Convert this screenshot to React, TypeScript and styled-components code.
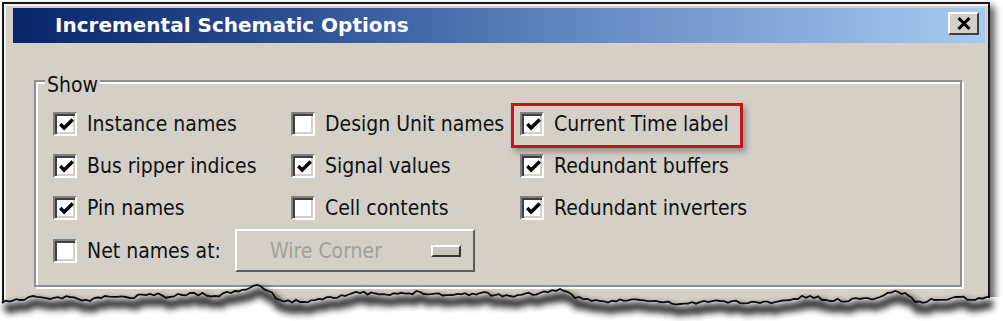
import React from 'react';
import styled, { createGlobalStyle, css } from 'styled-components';

const GlobalStyle = createGlobalStyle`
    html, body {
        margin: 0;
        padding: 0;
        background: #fff;
    }
    body {
        font-family: "DejaVu Sans Condensed", "DejaVu Sans", Tahoma, sans-serif;
    }
`;

// rough outline of the torn paper edge, in page coordinates
const anchors: [number, number][] = [
    [2, 303], [20, 300], [33, 296], [50, 299], [70, 297], [90, 301], [105, 296],
    [130, 298], [150, 294], [170, 297], [190, 293], [215, 296], [235, 291],
    [257, 285], [268, 291], [280, 300], [300, 302], [330, 297], [360, 293],
    [390, 295], [420, 292], [450, 295], [480, 293], [510, 296], [540, 293],
    [560, 289], [575, 298], [600, 301], [640, 300], [680, 304], [720, 301],
    [760, 303], [790, 300], [810, 296], [830, 301], [860, 299], [880, 297],
    [895, 291], [905, 293], [915, 302], [935, 300], [960, 297], [975, 300],
    [990, 297],
];

function tornPoints(): [number, number][] {
    let seed = 11;
    const rnd = () => {
        seed = (seed * 16807) % 2147483647;
        return seed / 2147483647;
    };
    const pts: [number, number][] = [];
    for (let i = 0; i < anchors.length - 1; i++) {
        const [x0, y0] = anchors[i];
        const [x1, y1] = anchors[i + 1];
        const steps = Math.max(1, Math.round((x1 - x0) / 4));
        for (let s = 0; s < steps; s++) {
            const t = s / steps;
            const jitter = s === 0 ? 0 : (rnd() - 0.5) * 3.4;
            pts.push([x0 + (x1 - x0) * t, y0 + (y1 - y0) * t + jitter]);
        }
    }
    pts.push(anchors[anchors.length - 1]);
    return pts;
}

const torn = tornPoints();
const linePath = torn.map(([x, y], i) => `${i ? 'L' : 'M'}${x.toFixed(1)} ${y.toFixed(1)}`).join(' ');
const fillPath = `M0 ${torn[0][1]} ${linePath.replace(/^M/, 'L')} L1003 ${torn[torn.length - 1][1]} L1003 321 L0 321 Z`;

interface CheckProps {
    checked?: boolean
}

const CheckBox = ({ checked }: CheckProps) => (
    <Box>
        {checked && (
            <svg width="15" height="15" viewBox="0 0 7 7">
                <path d="M0.6 2.8 L2.4 4.7 L6.4 0.7" fill="none" stroke="#000" strokeWidth="1.6" />
            </svg>
        )}
    </Box>
);

interface OptionProps {
    label: string,
    checked?: boolean,
    highlight?: boolean
}

const Option = ({ label, checked, highlight }: OptionProps) => (
    <Item $highlight={highlight}>
        <CheckBox checked={checked} />
        <Label>{label}</Label>
    </Item>
);

const TornEdge = () => (
    <Torn width="1003" height="321" viewBox="0 0 1003 321">
        <defs>
            <filter id="tornShadow" x="-5%" y="-50%" width="110%" height="200%">
                <feGaussianBlur stdDeviation="3.2" />
            </filter>
        </defs>
        <path d={fillPath} fill="#fff" />
        <path d={linePath} transform="translate(3 7)" fill="none" stroke="#222" strokeWidth="9" opacity="0.9" filter="url(#tornShadow)" />
        <path d={linePath} fill="none" stroke="#0c0c0c" strokeWidth="1.8" />
    </Torn>
);

class App extends React.Component {
    render() {
        return (
            <Stage>
                <GlobalStyle />
                <Window>
                    <TitleBar>
                        <Title>Incremental Schematic Options</Title>
                        <CloseButton aria-label="Close">
                            <svg width="16" height="13" viewBox="0 0 16 13">
                                <path d="M2.5 1 L13.5 12 M13.5 1 L2.5 12" stroke="#000" strokeWidth="3" />
                            </svg>
                        </CloseButton>
                    </TitleBar>
                    <GroupBox>
                        <Legend>Show</Legend>
                        <Grid>
                            <Option label="Instance names" checked />
                            <Option label="Design Unit names" />
                            <Option label="Current Time label" checked highlight />
                            <Option label="Bus ripper indices" checked />
                            <Option label="Signal values" checked />
                            <Option label="Redundant buffers" checked />
                            <Option label="Pin names" checked />
                            <Option label="Cell contents" />
                            <Option label="Redundant inverters" checked />
                            <NetRow>
                                <Option label="Net names at:" />
                                <Dropdown>
                                    <span>Wire Corner</span>
                                    <Indicator />
                                </Dropdown>
                            </NetRow>
                        </Grid>
                    </GroupBox>
                </Window>
                <TornEdge />
            </Stage>
        );
    }
}

export default App;

const Stage = styled.div`
    position: relative;
    width: 1003px;
    height: 321px;
    overflow: hidden;
    box-sizing: border-box;
    padding: 2px 0 0 2px;
    background: #fff;
`;

const Window = styled.div`
    box-sizing: border-box;
    width: 988px;
    height: 330px;
    padding: 4px 3px 0 9px;
    background: #d4d0c8;
    border: 2px solid #161616;
    box-shadow: inset 2px 2px 0 #f2f1ee, 5px 4px 7px rgba(0, 0, 0, 0.6);
`;

const TitleBar = styled.div`
    display: flex;
    align-items: center;
    height: 35px;
    padding-left: 42px;
    background: linear-gradient(90deg, #0a246a 0%, #2d5296 30%, #6a8fc6 62%, #a6caf0 100%);
`;

const Title = styled.div`
    flex: 1;
    color: #fff;
    font-family: "DejaVu Sans", Tahoma, sans-serif;
    font-weight: bold;
    font-size: 20px;
    line-height: 35px;
`;

const CloseButton = styled.div`
    align-self: flex-start;
    display: flex;
    align-items: center;
    justify-content: center;
    box-sizing: border-box;
    width: 31px;
    height: 23px;
    margin: 4px 6px 0 0;
    background: #d4d0c8;
    border: 2px solid;
    border-color: #fff #404040 #404040 #fff;
`;

const GroupBox = styled.div`
    margin: 37px 23px 0 21px;
    padding: 0 0 13px 17px;
    border: 2px solid #8e8e8e;
    box-shadow: inset 2px 2px 0 #fff, 2px 2px 0 #fff;
`;

const Legend = styled.div`
    width: fit-content;
    margin: -8px 0 0 -8px;
    padding: 0 2px;
    background: #d4d0c8;
    color: #111;
    font-size: 21px;
    line-height: 22px;
`;

const Grid = styled.div`
    display: grid;
    grid-template-columns: 238px 229px 1fr;
    grid-template-rows: repeat(3, 42px) 43px;
    align-items: center;
    margin-top: 7px;
`;

const Item = styled.div<{ $highlight?: boolean }>`
    position: relative;
    display: flex;
    align-items: center;
    gap: 10px;
    width: fit-content;
    ${({ $highlight }) => $highlight && css`
        &::after {
            content: '';
            position: absolute;
            top: -9px;
            bottom: -12px;
            left: -9px;
            right: -14px;
            border: 3px solid #c8141e;
            box-shadow: 3px 4px 6px rgba(0, 0, 0, 0.3);
        }
    `}
`;

const Box = styled.div`
    box-sizing: border-box;
    display: flex;
    align-items: center;
    justify-content: center;
    width: 24px;
    height: 24px;
    flex: none;
    background: #fff;
    border: 2px solid;
    border-color: #808080 #fff #fff #808080;
    box-shadow: inset 2px 2px 0 #404040, inset -2px -2px 0 #d4d0c8;
    padding: 2px 0 0 2px;
`;

const Label = styled.span`
    color: #111;
    font-size: 21px;
    line-height: 24px;
    white-space: nowrap;
`;

const NetRow = styled.div`
    grid-column: 1 / -1;
    display: grid;
    grid-template-columns: 182px 240px;
    align-items: center;
`;

const Dropdown = styled.div`
    box-sizing: border-box;
    display: flex;
    align-items: center;
    justify-content: space-between;
    width: 240px;
    height: 43px;
    padding: 0 12px 0 33px;
    border: 2px solid;
    border-color: #fff #5c5c5c #5c5c5c #fff;
    color: #a39f98;
    font-size: 21px;
`;

const Indicator = styled.div`
    box-sizing: border-box;
    width: 30px;
    height: 12px;
    background: #c9c5bd;
    border: 2px solid;
    border-color: #fff #363636 #363636 #fff;
`;

const Torn = styled.svg`
    position: absolute;
    top: 0;
    left: 0;
    pointer-events: none;
`;
